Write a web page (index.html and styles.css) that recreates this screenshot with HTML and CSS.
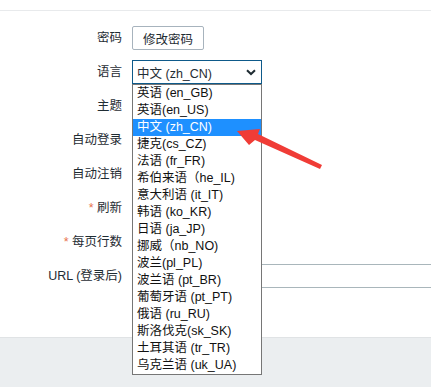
FILE: index.html
```html
<!DOCTYPE html>
<html lang="zh-CN">
<head>
<meta charset="utf-8">
<link rel="stylesheet" href="styles.css">
</head>
<body>
<div class="topbar"></div>
<div class="form">
  <div class="label">密码</div>
  <div class="ctrl"><button class="btn">修改密码</button></div>

  <div class="label">语言</div>
  <div class="ctrl">
    <div class="select">
      <span>中文 (zh_CN)</span>
      <svg class="chev" width="10" height="7" viewBox="0 0 10 7"><path d="M1 1.2 L5 5 L9 1.2" fill="none" stroke="#1f2c33" stroke-width="2"/></svg>
    </div>
  </div>

  <div class="label">主题</div>
  <div class="ctrl"></div>

  <div class="label">自动登录</div>
  <div class="ctrl"></div>

  <div class="label">自动注销</div>
  <div class="ctrl"></div>

  <div class="label"><span class="req">*</span> 刷新</div>
  <div class="ctrl"></div>

  <div class="label"><span class="req">*</span> 每页行数</div>
  <div class="ctrl"></div>

  <div class="label">URL (登录后)</div>
  <div class="ctrl clip"><div class="input"></div></div>
</div>
<div class="footer"></div>

<ul class="list">
  <li>英语 (en_GB)</li>
  <li>英语(en_US)</li>
  <li class="sel">中文 (zh_CN)</li>
  <li>捷克(cs_CZ)</li>
  <li>法语 (fr_FR)</li>
  <li>希伯来语（he_IL)</li>
  <li>意大利语 (it_IT)</li>
  <li>韩语 (ko_KR)</li>
  <li>日语 (ja_JP)</li>
  <li>挪威（nb_NO)</li>
  <li>波兰(pl_PL)</li>
  <li>波兰语 (pt_BR)</li>
  <li>葡萄牙语 (pt_PT)</li>
  <li>俄语 (ru_RU)</li>
  <li>斯洛伐克(sk_SK)</li>
  <li>土耳其语 (tr_TR)</li>
  <li>乌克兰语 (uk_UA)</li>
</ul>

<svg class="arrow" width="431" height="387" viewBox="0 0 431 387">
  <polygon points="237,131 260,129 258,134 322,165 320,169 255,140 249,145" fill="#f03c36"/>
</svg>
</body>
</html>
```

FILE: styles.css
```css
html, body {
  margin: 0;
  padding: 0;
  overflow: hidden;
  background: #fff;
  font-family: "Liberation Sans", "Noto Sans CJK SC", sans-serif;
  font-size: 12px;
  color: #1f2c33;
}

body {
  width: 431px;
  height: 387px;
  position: relative;
}

.topbar {
  height: 10px;
  border-bottom: 1px solid #e8eaec;
}

.form {
  display: grid;
  grid-template-columns: 122px 1fr;
  column-gap: 10px;
  row-gap: 10px;
  grid-auto-rows: 24px;
  padding-top: 15px;
}

.label {
  text-align: right;
  line-height: 24px;
  white-space: nowrap;
  font-size: 12.5px;
}

.req {
  color: #e8734e;
}

.ctrl {
  display: flex;
  align-items: center;
  min-width: 0;
}

.clip {
  overflow: hidden;
}

.btn {
  height: 24px;
  width: 72px;
  padding: 0;
  margin: 0;
  background: #fff;
  border: 1px solid #a7b3bd;
  border-radius: 2px;
  font-family: inherit;
  font-size: 12.5px;
  color: #1f2c33;
}

.select {
  box-sizing: border-box;
  width: 130px;
  height: 24px;
  border: 1px solid #0e5a8a;
  display: flex;
  align-items: center;
  justify-content: space-between;
  padding: 0 5px 0 4px;
  color: #1f2c33;
  font-size: 12.5px;
}

.chev {
  display: block;
}

.input {
  box-sizing: border-box;
  height: 24px;
  width: calc(100% + 4px);
  flex: none;
  border: 1px solid #a9b6bb;
}

.footer {
  margin-top: 49px;
  height: 60px;
  background: #ebeef0;
  border-top: 1px solid #e0e3e5;
}

.list {
  position: absolute;
  left: 132px;
  top: 84px;
  width: 128px;
  margin: 0;
  padding: 0;
  list-style: none;
  background: #fff;
  border: 1px solid #767676;
  color: #111;
  font-size: 12.5px;
}

.list li {
  height: 17px;
  line-height: 17px;
  padding-left: 4px;
  white-space: nowrap;
}

.list li.sel {
  background: #1e90ff;
  color: #fff;
}

.arrow {
  position: absolute;
  left: 0;
  top: 0;
  pointer-events: none;
}
```
